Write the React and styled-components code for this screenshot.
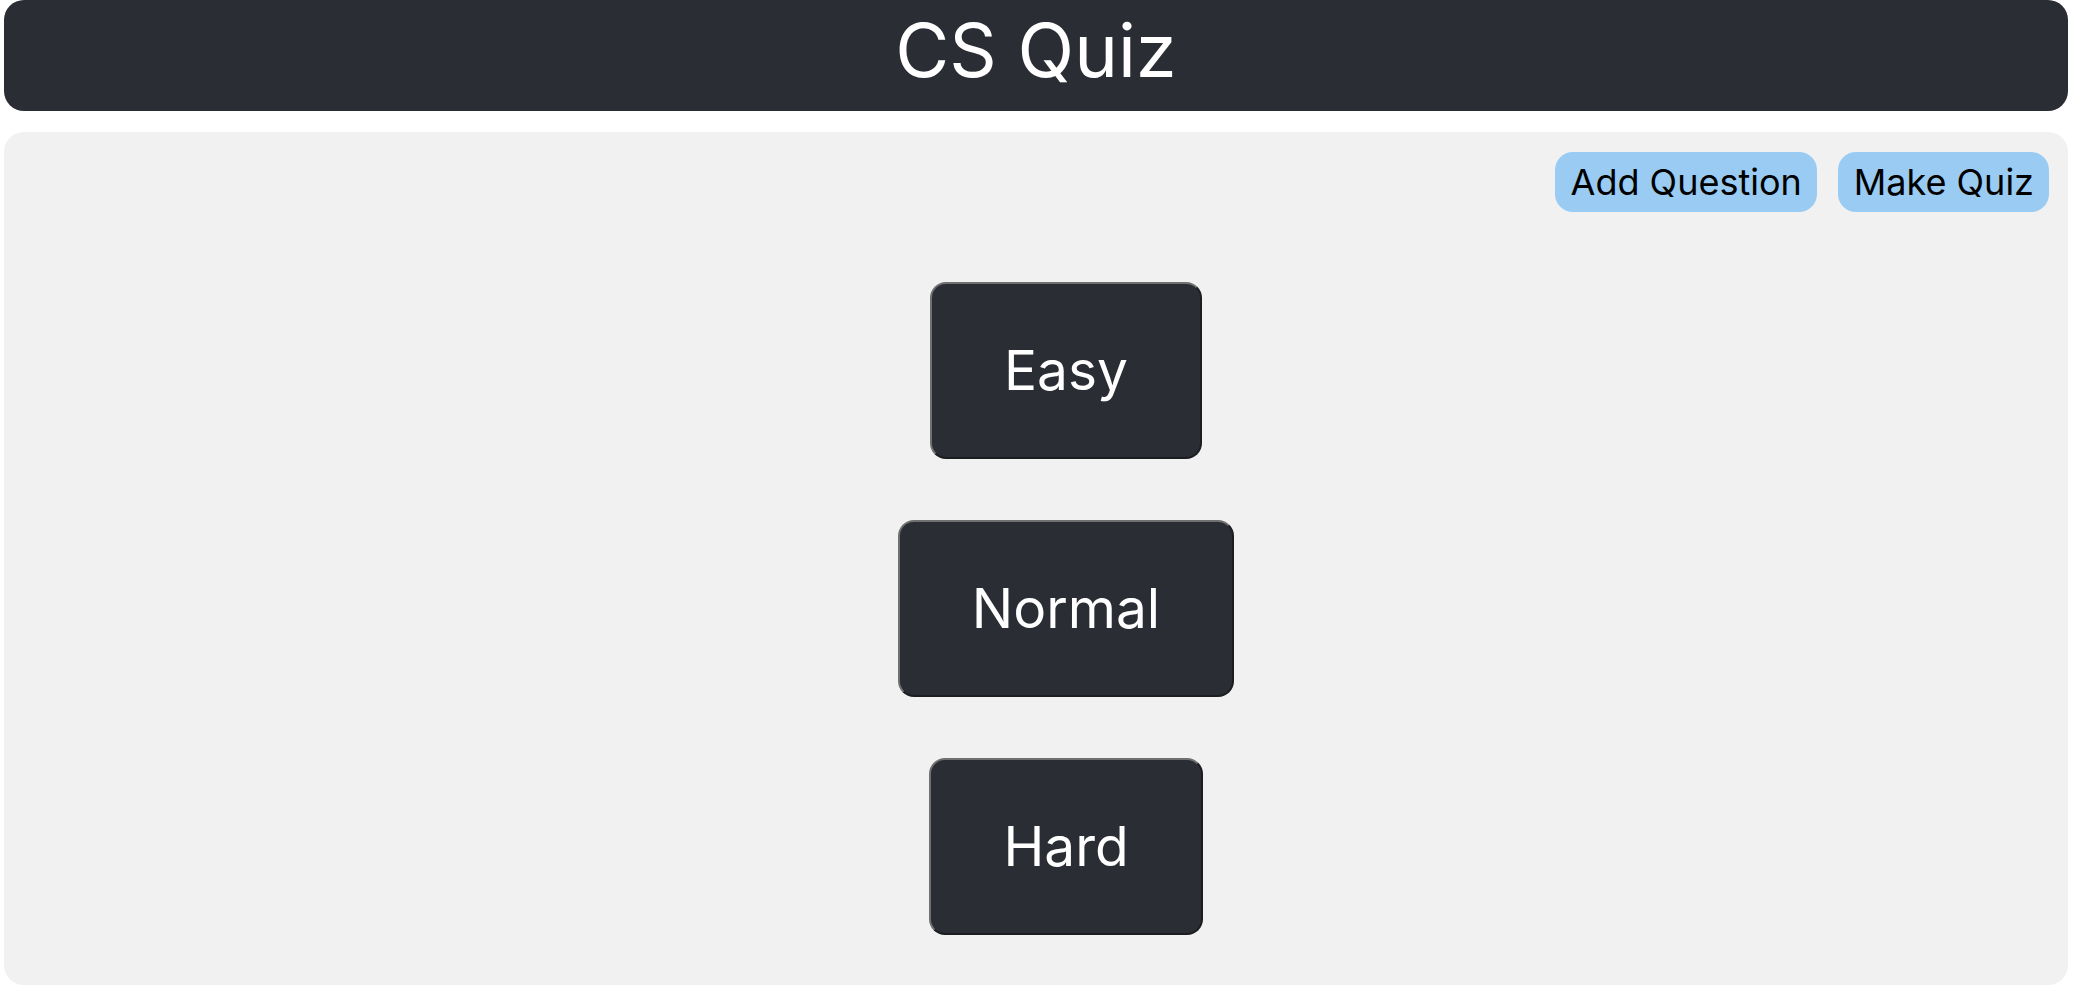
import React from "react";
import styled, { createGlobalStyle } from "styled-components";

const Global = createGlobalStyle`
  html, body { margin: 0; padding: 0; background: #ffffff; }
  body { font-family: Inter, "Noto Sans", "Liberation Sans", sans-serif; }
`;

const Page = styled.div`
  display: flex;
  flex-direction: column;
  gap: 21px;
  padding: 0 8px 3px 4px;
  box-sizing: border-box;
  height: 988px;
`;

const Header = styled.header`
  height: 111px;
  background: #2a2d34;
  border-radius: 20px;
  display: flex;
  align-items: center;
  justify-content: center;
  box-sizing: border-box;
  padding-bottom: 12px;
`;

const Title = styled.h1`
  margin: 0;
  color: #ffffff;
  font-size: 74px;
  font-weight: 400;
  line-height: 1;
`;

const Panel = styled.main`
  flex: 1;
  background: #f1f1f1;
  border-radius: 20px;
  display: flex;
  flex-direction: column;
  padding: 20px 19px 50px 32px;
  box-sizing: border-box;
`;

const Toolbar = styled.div`
  display: flex;
  justify-content: flex-end;
  gap: 21px;
`;

const ToolButton = styled.button`
  height: 60px;
  padding: 0 15px 0 16px;
  border: none;
  border-radius: 18px;
  background: #99cbf3;
  color: #000000;
  font-family: inherit;
  font-size: 36px;
  line-height: 1;
  cursor: pointer;
`;

const Levels = styled.div`
  flex: 1;
  display: flex;
  flex-direction: column;
  align-items: center;
  justify-content: flex-end;
  gap: 61px;
  padding-left: 47px;
`;

const LevelButton = styled.button`
  height: 177px;
  padding: 0 72px;
  border: 2px solid;
  border-color: #707070 #1c1d20 #1c1d20 #707070;
  border-radius: 16px;
  background: #2a2d34;
  color: #ffffff;
  font-family: inherit;
  font-size: 55px;
  line-height: 1;
  cursor: pointer;
`;

export default function App() {
  return (
    <>
      <Global />
      <Page>
        <Header>
          <Title>CS Quiz</Title>
        </Header>
        <Panel>
          <Toolbar>
            <ToolButton>Add Question</ToolButton>
            <ToolButton>Make Quiz</ToolButton>
          </Toolbar>
          <Levels>
            <LevelButton>Easy</LevelButton>
            <LevelButton>Normal</LevelButton>
            <LevelButton>Hard</LevelButton>
          </Levels>
        </Panel>
      </Page>
    </>
  );
}
